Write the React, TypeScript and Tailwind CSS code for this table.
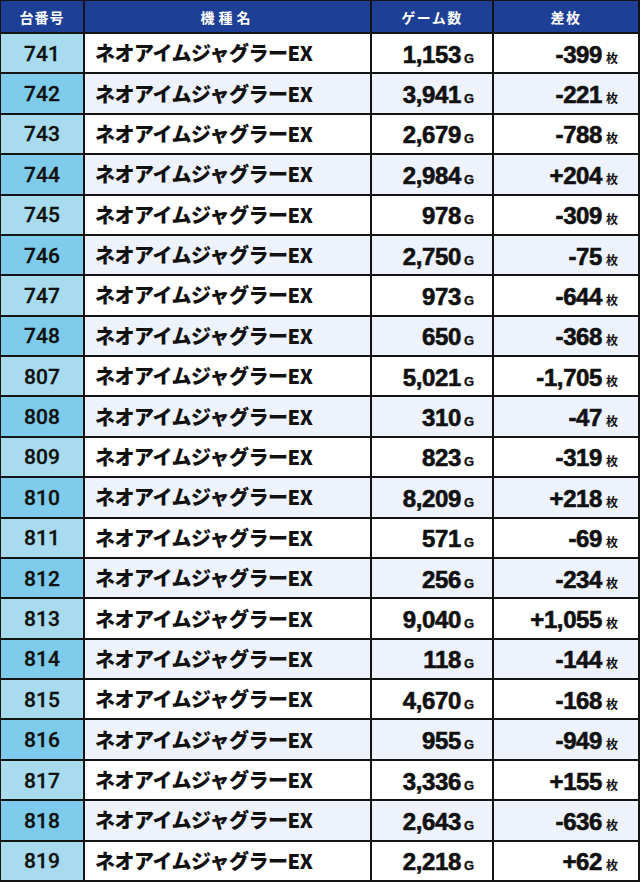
const rows = [
  ['741', '1,153', '-399'],
  ['742', '3,941', '-221'],
  ['743', '2,679', '-788'],
  ['744', '2,984', '+204'],
  ['745', '978', '-309'],
  ['746', '2,750', '-75'],
  ['747', '973', '-644'],
  ['748', '650', '-368'],
  ['807', '5,021', '-1,705'],
  ['808', '310', '-47'],
  ['809', '823', '-319'],
  ['810', '8,209', '+218'],
  ['811', '571', '-69'],
  ['812', '256', '-234'],
  ['813', '9,040', '+1,055'],
  ['814', '118', '-144'],
  ['815', '4,670', '-168'],
  ['816', '955', '-949'],
  ['817', '3,336', '+155'],
  ['818', '2,643', '-636'],
  ['819', '2,218', '+62'],
];

const jp = "font-['Noto_Sans_CJK_JP',sans-serif]";
const num = "font-['Liberation_Sans','Noto_Sans_CJK_JP',sans-serif]";

const App = () => {
  return (
    <div className="w-[640px] h-[882px] bg-[#141414] pt-px pl-px pr-[2px] pb-[2px] grid grid-cols-[82px_285px_120px_144px] grid-rows-[31px_repeat(21,minmax(0,1fr))] gap-[2px] leading-none">
      {/* Header */}
      <div className={`bg-[#1d3f95] text-white flex items-center justify-center text-[14px] font-bold tracking-[1px] ${jp}`}>台番号</div>
      <div className={`bg-[#1d3f95] text-white flex items-center justify-center text-[14px] font-bold tracking-[4px] ${jp}`}>機種名</div>
      <div className={`bg-[#1d3f95] text-white flex items-center justify-center text-[14px] font-bold tracking-[1.5px] ${jp}`}>ゲーム数</div>
      <div className={`bg-[#1d3f95] text-white flex items-center justify-center text-[14px] font-bold tracking-[1.5px] ${jp}`}>差枚</div>

      {rows.map(([no, games, diff], i) => {
        const even = i % 2 === 1;
        const cell = even ? 'bg-[#edf2fb]' : 'bg-white';
        return [
          <div
            key={`a${i}`}
            className={`${even ? 'bg-[#7ecbeb]' : 'bg-[#a8dbee]'} flex items-center justify-center pt-[2px] text-[21px] font-medium text-[#111] font-['Roboto',sans-serif] [-webkit-text-stroke:0.3px_#111]`}
          >
            {no}
          </div>,
          <div key={`b${i}`} className={`${cell} flex items-center pl-[10px] text-[20px] font-black tracking-[-0.5px] text-[#111] ${jp}`}>
            ネオアイムジャグラーEX
          </div>,
          <div key={`c${i}`} className={`${cell} flex items-center justify-end pr-[18px] pt-[3px] text-[#111] ${num}`}>
            <div className="flex items-baseline">
              <span className="text-[24px] font-bold tracking-[-0.4px] [-webkit-text-stroke:0.6px_#111]">{games}</span>
              <span className="text-[13px] font-bold ml-[3px] [-webkit-text-stroke:0.3px_#111]">G</span>
            </div>
          </div>,
          <div key={`d${i}`} className={`${cell} flex items-center justify-end pr-[20px] pt-[3px] text-[#111] ${num}`}>
            <div className="flex items-baseline">
              <span className="text-[24px] font-bold tracking-[-0.4px] [-webkit-text-stroke:0.6px_#111]">{diff}</span>
              <span className={`text-[12px] font-bold ml-[4px] ${jp}`}>枚</span>
            </div>
          </div>,
        ];
      })}
    </div>
  );
};

export default App;
